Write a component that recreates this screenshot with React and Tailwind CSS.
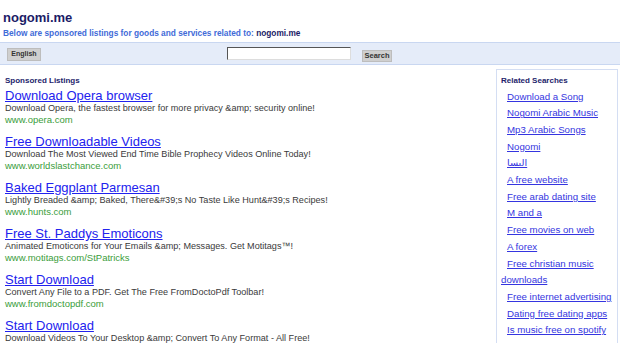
const ads = [
  {
    t: "Download Opera browser",
    d: "Download Opera, the fastest browser for more privacy &amp; security online!",
    u: "www.opera.com",
  },
  {
    t: "Free Downloadable Videos",
    d: "Download The Most Viewed End Time Bible Prophecy Videos Online Today!",
    u: "www.worldslastchance.com",
  },
  {
    t: "Baked Eggplant Parmesan",
    d: "Lightly Breaded &amp; Baked, There&#39;s No Taste Like Hunt&#39;s Recipes!",
    u: "www.hunts.com",
  },
  {
    t: "Free St. Paddys Emoticons",
    d: "Animated Emoticons for Your Emails &amp; Messages. Get Motitags\u2122!",
    u: "www.motitags.com/StPatricks",
  },
  {
    t: "Start Download",
    d: "Convert Any File to a PDF. Get The Free FromDoctoPdf Toolbar!",
    u: "www.fromdoctopdf.com",
  },
  {
    t: "Start Download",
    d: "Download Videos To Your Desktop &amp; Convert To Any Format - All Free!",
    u: "",
  },
];

const related = [
  "Download a Song",
  "Nogomi Arabic Music",
  "Mp3 Arabic Songs",
  "Nogomi",
  "\u0627\u0644\u064A\u0633\u0627",
  "A free website",
  "Free arab dating site",
  "M and a",
  "Free movies on web",
  "A forex",
  "Free christian music downloads",
  "Free internet advertising",
  "Dating free dating apps",
  "Is music free on spotify",
];

export default function App() {
  return (
    <div
      className="w-[620px] h-[343px] overflow-hidden bg-white"
      style={{ fontFamily: '"Liberation Sans", Arial, "DejaVu Sans", sans-serif' }}
    >
      <div className="pl-[3px] pt-[10px]">
        <div className="text-[13px] leading-[15px] font-bold text-[#1b1b66]">nogomi.me</div>
        <div className="mt-[2.5px] text-[8.3px] leading-[10px] font-bold text-[#3f6bd8]">
          Below are sponsored listings for goods and services related to:{" "}
          <span className="text-[#1b1b66]">nogomi.me</span>
        </div>
      </div>
      <div className="mt-[4.5px] h-[23px] bg-[#e5ecf9] border-y border-[#c9d7f1] flex items-start">
        <div className="ml-[7px] mt-[5px] w-[34px] h-[13px] bg-[#cfcfcf] border border-[#bdbdbd] flex items-center justify-center text-[7px] font-bold text-[#333]">
          English
        </div>
        <div className="ml-[186px] mt-[4px] w-[124px] h-[13px] bg-white border border-t-[#555] border-l-[#555] border-r-[#ddd] border-b-[#ddd]"></div>
        <div className="ml-[11px] mt-[7px] w-[30px] h-[12px] bg-[#cfcfcf] border border-[#bdbdbd] flex items-center justify-center text-[7.5px] font-bold text-[#333]">
          Search
        </div>
      </div>
      <div className="flex items-start">
        <div className="flex-1 pl-[5px] pt-[11px]">
          <div className="text-[8px] leading-[10px] font-bold text-[#23236b]">Sponsored Listings</div>
          <div className="mt-[2px] flex flex-col gap-[9px]">
            {ads.map((a, i) => (
              <div key={i}>
                <div className="text-[13px] leading-[15px] text-[#2222ee] underline underline-offset-[1px]">
                  {a.t}
                </div>
                <div className="text-[9.1px] leading-[11px] text-[#3a3a3a]">{a.d}</div>
                {a.u && <div className="text-[9.5px] leading-[11px] text-[#3a9d3a]">{a.u}</div>}
              </div>
            ))}
          </div>
        </div>
        <div className="mt-[4px] mr-[2px] w-[122px] h-[300px] border border-[#d4def3] pl-[4px] pr-[2px] pt-[5.5px]">
          <div className="text-[8px] leading-[10px] font-bold text-[#23236b]">Related Searches</div>
          <div className="mt-[3px]">
            {related.map((r, i) => (
              <div key={i} className="text-[9.7px] leading-[16.7px]">
                <a className="ml-[6px] text-[#3535e0] underline">{r}</a>
              </div>
            ))}
          </div>
        </div>
      </div>
    </div>
  );
}
